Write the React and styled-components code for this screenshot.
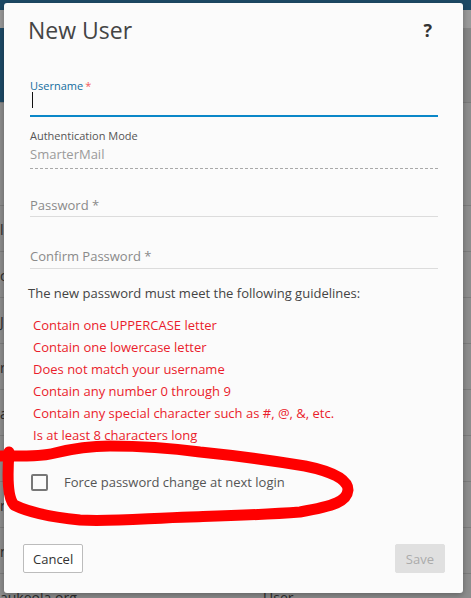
import React from 'react'
import styled, { createGlobalStyle } from 'styled-components'

const Global = createGlobalStyle`
  html, body { margin: 0; padding: 0; }
  body {
    width: 471px;
    height: 598px;
    overflow: hidden;
    font-family: "Open Sans", "Noto Sans", "DejaVu Sans", sans-serif;
    background: #8d8d8d;
  }
`

const rules = [
  'Contain one UPPERCASE letter',
  'Contain one lowercase letter',
  'Does not match your username',
  'Contain any number 0 through 9',
  'Contain any special character such as #, @, &, etc.',
  'Is at least 8 characters long',
]

const rows = [
  { a: 'l' },
  { a: 'c' },
  { a: 'J' },
  { a: 'r' },
  { a: 'a' },
  { a: '' },
  { a: 'r' },
  { a: 'n' },
  { a: 'aukeola.org', b: 'User' },
]

function App() {
  return (
    <>
      <Global />
      <Page>
        <TopBar />
        <ToolBar />
        <Banner>
          <BannerSide />
        </Banner>
        <ListHead />
        {rows.map((r, i) => (
          <ListRow key={i}>
            <RowText>{r.a}</RowText>
            {r.b && <RowRole>{r.b}</RowRole>}
          </ListRow>
        ))}
      </Page>

      <Modal>
        <Header>
          <Title>New User</Title>
          <Help>?</Help>
        </Header>

        <Body>
          <Label active>
            Username<Star>*</Star>
          </Label>
          <FocusInput>
            <Caret />
          </FocusInput>

          <Label mt={13}>Authentication Mode</Label>
          <ReadValue>SmarterMail</ReadValue>

          <Placeholder mt={27} pb={2}>Password *</Placeholder>
          <Placeholder mt={30} pb={3}>Confirm Password *</Placeholder>

          <Guide>The new password must meet the following guidelines:</Guide>
          <RuleList>
            {rules.map((r) => (
              <li key={r}>{r}</li>
            ))}
          </RuleList>

          <CheckRow>
            <Box />
            <CheckText>Force password change at next login</CheckText>
          </CheckRow>
        </Body>

        <Footer>
          <Button>Cancel</Button>
          <Button disabled>Save</Button>
        </Footer>
      </Modal>

      <Scribble viewBox="0 0 471 598" width="471" height="598">
        <path
          d="M -4 456 C 20 456, 40 457, 55 453 C 75 448, 90 446, 110 446 C 140 446, 170 448, 200 452 C 240 456, 275 461, 305 466 C 330 471, 348 479, 348 490 C 347 501, 335 506, 300 512 C 260 515, 220 516, 190 517 C 150 518, 110 522, 80 520 C 50 517, 30 513, 14 505 C 8 498, 7 480, 9 452"
          fill="none"
          stroke="#ff0000"
          strokeWidth="11"
          strokeLinecap="round"
          strokeLinejoin="round"
        />
      </Scribble>
    </>
  )
}

export default App

const Page = styled.div`
  display: flex;
  flex-direction: column;
  width: 471px;
  height: 598px;
  overflow: hidden;
`

const TopBar = styled.div`
  height: 10px;
  background: #1d4a66;
  flex-shrink: 0;
`

const ToolBar = styled.div`
  height: 18px;
  background: #9a9a9a;
  flex-shrink: 0;
`

const Banner = styled.div`
  display: flex;
  height: 74px;
  background: #868686;
  border-bottom: 1px solid #7a7a7a;
  flex-shrink: 0;
`

const BannerSide = styled.div`
  width: 120px;
  background: #1d4a66;
`

const ListHead = styled.div`
  height: 102px;
  border-bottom: 1px solid #7c7c7c;
  flex-shrink: 0;
`

const ListRow = styled.div`
  display: flex;
  align-items: center;
  height: 45px;
  border-bottom: 1px solid #7c7c7c;
  flex-shrink: 0;
  font-size: 14px;
  color: #2b2b2b;
  position: relative;
`

const RowText = styled.span`
  white-space: nowrap;
  padding-top: 2px;
`

const RowRole = styled.span`
  position: absolute;
  left: 263px;
  top: 14px;
`

const Modal = styled.div`
  position: absolute;
  top: 3px;
  left: 4px;
  width: 459px;
  height: 590px;
  box-sizing: border-box;
  background: #fbfbfb;
  border-radius: 3px;
  box-shadow: 0 2px 6px rgba(0, 0, 0, 0.3);
  display: flex;
  flex-direction: column;
`

const Header = styled.div`
  display: flex;
  align-items: center;
  justify-content: space-between;
  padding: 11px 31px 0 24px;
`

const Title = styled.h1`
  margin: 0;
  font-size: 23px;
  line-height: 32px;
  font-weight: 400;
  color: #444;
`

const Help = styled.span`
  font-size: 18px;
  font-weight: 700;
  color: #333;
  line-height: 32px;
`

const Body = styled.div`
  display: flex;
  flex-direction: column;
  padding: 0 25px 0 26px;
  margin-top: 34px;
`

const Label = styled.div`
  font-size: 11px;
  line-height: 12px;
  margin-top: ${(p) => p.mt || 0}px;
  color: ${(p) => (p.active ? '#136d9e' : '#555')};
`

const Star = styled.span`
  color: #f35b5b;
  margin-left: 2px;
`

const FocusInput = styled.div`
  height: 23px;
  border-bottom: 2px solid #0a87c8;
  display: flex;
  align-items: flex-start;
`

const Caret = styled.span`
  width: 1px;
  height: 16px;
  margin-left: 2px;
  background: #111;
`

const ReadValue = styled.div`
  font-size: 13px;
  line-height: 18px;
  padding: 3px 0 5px;
  color: #9a9a9a;
  border-bottom: 1px dashed #a9a9a9;
`

const Placeholder = styled.div`
  font-size: 13px;
  line-height: 18px;
  margin-top: ${(p) => p.mt}px;
  padding-bottom: ${(p) => p.pb}px;
  color: #8a8a8a;
  border-bottom: 1px solid #dcdcdc;
`

const Guide = styled.p`
  margin: 15px 0 0 -2px;
  font-size: 13px;
  line-height: 18px;
  color: #444;
`

const RuleList = styled.ul`
  list-style: none;
  margin: 12px 0 0;
  padding: 0 0 0 3px;
  li {
    font-size: 13px;
    line-height: 22px;
    color: #ea1d2c;
  }
`

const CheckRow = styled.label`
  display: flex;
  align-items: center;
  margin-top: 27px;
  padding-left: 1px;
  height: 18px;
`

const Box = styled.span`
  width: 13px;
  height: 13px;
  border: 2px solid #777;
  border-radius: 2px;
  flex-shrink: 0;
`

const CheckText = styled.span`
  margin-left: 16px;
  font-size: 13px;
  color: #555;
`

const Footer = styled.div`
  margin-top: auto;
  display: flex;
  justify-content: space-between;
  padding: 0 18px 20px 19px;
`

const Button = styled.button`
  height: 29px;
  padding: 0 ${(p) => (p.disabled ? 10 : 9)}px;
  font-family: inherit;
  font-size: 13px;
  border-radius: 2px;
  border: 1px solid ${(p) => (p.disabled ? '#e0e0e0' : '#bcbcbc')};
  background: ${(p) => (p.disabled ? '#e0e0e0' : '#fff')};
  color: ${(p) => (p.disabled ? '#ababab' : '#333')};
`

const Scribble = styled.svg`
  position: absolute;
  top: 0;
  left: 0;
  pointer-events: none;
`
